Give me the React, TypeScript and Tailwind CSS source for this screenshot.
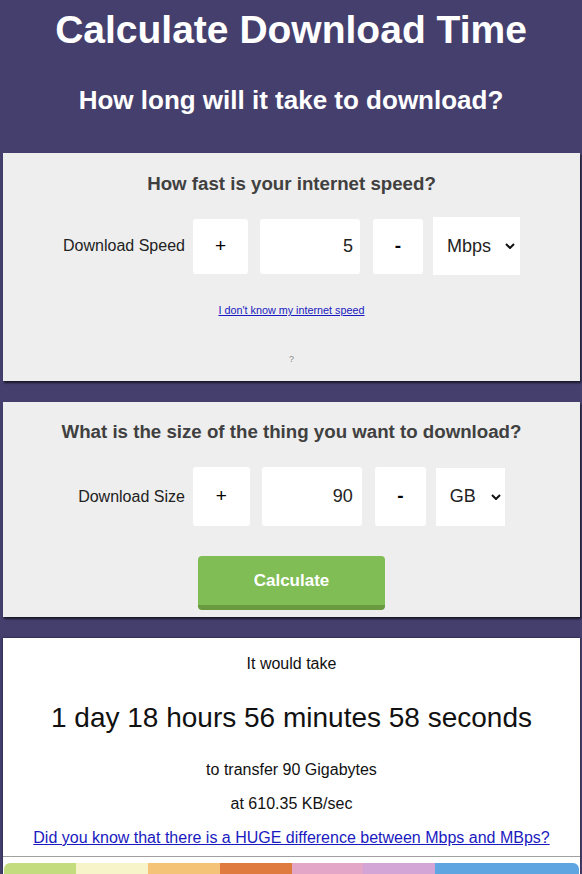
import { useState } from "react";

const strip = [
  "bg-[#c3dc7e]",
  "bg-[#f6f4c8]",
  "bg-[#f4c378]",
  "bg-[#e07b40]",
  "bg-[#e3a6c6]",
  "bg-[#d3a5d7]",
  "bg-[#5fa5e2]",
  "bg-[#5fa5e2]",
];

type RowProps = {
  label: string;
  value: string;
  unit: string;
  units: string[];
  onChange: (v: string) => void;
  onUnit: (v: string) => void;
  plusCls: string;
  inputCls: string;
  minusCls: string;
  selectCls: string;
};

function Chevron() {
  return (
    <svg width="10" height="6" viewBox="0 0 10 6" className="shrink-0">
      <path d="M1 1l4 4 4-4" fill="none" stroke="#111" strokeWidth="2" />
    </svg>
  );
}

function InputRow(p: RowProps) {
  const step = (d: number) => {
    const n = Number(p.value) || 0;
    p.onChange(String(Math.max(0, n + d)));
  };
  return (
    <div className="flex items-center justify-center text-[#222]">
      <span className="text-[16px]">{p.label}</span>
      <button
        onClick={() => step(1)}
        className={`ml-[8px] flex items-center justify-center rounded-[3px] bg-white text-[19px] text-black ${p.plusCls}`}
      >
        +
      </button>
      <input
        value={p.value}
        onChange={(e) => p.onChange(e.target.value)}
        className={`ml-[12px] w-[100px] rounded-[3px] bg-white pr-[7px] text-right text-[18px] outline-none ${p.inputCls}`}
      />
      <button
        onClick={() => step(-1)}
        className={`ml-[13px] flex items-center justify-center rounded-[3px] bg-white text-[19px] font-bold text-black ${p.minusCls}`}
      >
        -
      </button>
      <div className={`ml-[10px] flex items-center bg-white pl-[14px] ${p.selectCls}`}>
        <select
          value={p.unit}
          onChange={(e) => p.onUnit(e.target.value)}
          className="flex-1 appearance-none bg-transparent text-[18px] outline-none"
        >
          {p.units.map((u) => (
            <option key={u}>{u}</option>
          ))}
        </select>
        <Chevron />
      </div>
    </div>
  );
}

export default function App() {
  const [speed, setSpeed] = useState("5");
  const [speedUnit, setSpeedUnit] = useState("Mbps");
  const [size, setSize] = useState("90");
  const [sizeUnit, setSizeUnit] = useState("GB");

  return (
    <div className="h-[874px] overflow-hidden bg-[#453f6e] font-[family-name:Liberation_Sans,Arial,sans-serif]">
      <h1 className="pt-[7px] text-center text-[39px] font-bold leading-[46px] text-white">
        Calculate Download Time
      </h1>
      <h2 className="mt-[32px] text-center text-[26px] font-bold leading-[30px] text-white">
        How long will it take to download?
      </h2>

      <section className="ml-[3px] mr-[2px] mt-[38px] h-[228px] bg-[#eeeeee] pt-[20px] shadow-[1px_2px_2px_rgba(0,0,0,0.65)]">
        <h3 className="text-center text-[18.7px] font-bold leading-[22px] text-[#404040]">
          How fast is your internet speed?
        </h3>
        <div className="mt-[22px] h-[58px]">
          <InputRow
            label="Download Speed"
            value={speed}
            unit={speedUnit}
            units={["Kbps", "Mbps", "Gbps"]}
            onChange={setSpeed}
            onUnit={setSpeedUnit}
            plusCls="h-[55px] w-[55px]"
            inputCls="h-[55px]"
            minusCls="h-[55px] w-[50px]"
            selectCls="h-[58px] w-[87px] pr-[5px]"
          />
        </div>
        <p className="mt-[29px] text-center text-[10.8px] leading-[13px]">
          <a href="#" className="text-[#1a1ac0] underline">
            I don't know my internet speed
          </a>
        </p>
        <p className="mt-[37px] text-center text-[9px] leading-[11px] text-[#888]">?</p>
      </section>

      <section className="ml-[3px] mr-[2px] mt-[21px] h-[215px] bg-[#eeeeee] pt-[19px] shadow-[1px_2px_2px_rgba(0,0,0,0.65)]">
        <h3 className="text-center text-[18.7px] font-bold leading-[22px] text-[#404040]">
          What is the size of the thing you want to download?
        </h3>
        <div className="mt-[24px] h-[60px]">
          <InputRow
            label="Download Size"
            value={size}
            unit={sizeUnit}
            units={["KB", "MB", "GB", "TB"]}
            onChange={setSize}
            onUnit={setSizeUnit}
            plusCls="h-[59px] w-[57px]"
            inputCls="h-[59px] pr-[9px]"
            minusCls="h-[59px] w-[51px]"
            selectCls="h-[58px] w-[69px] pr-[4px]"
          />
        </div>
        <div className="mt-[29px] flex justify-center">
          <button className="h-[54px] w-[187px] rounded-[4px] border-b-[5px] border-[#6a9a40] bg-[#80bd55] text-[17px] font-bold text-white">
            Calculate
          </button>
        </div>
      </section>

      <section className="ml-[3px] mr-[2px] mt-[21px] bg-white pt-[16px] text-center text-[#111] shadow-[0_0_2px_rgba(0,0,0,0.6)]">
        <p className="text-[16px] leading-[20px]">It would take</p>
        <p className="mt-[28px] text-[28px] leading-[32px]">
          1 day 18 hours 56 minutes 58 seconds
        </p>
        <p className="mt-[26px] text-[16px] leading-[20px]">to transfer 90 Gigabytes</p>
        <p className="mt-[14px] text-[16px] leading-[20px]">at 610.35 KB/sec</p>
        <p className="mt-[14px] text-[16px] leading-[20px]">
          <a href="#" className="text-[#1a1ac0] underline">
            Did you know that there is a HUGE difference between Mbps and MBps?
          </a>
        </p>
        <div className="mt-[8px] h-px bg-[#a0a0a0]" />
        <div className="mx-px mt-[6px] flex h-[20px] overflow-hidden rounded-t-[6px]">
          {strip.map((c, i) => (
            <div key={i} className={`flex-1 ${c}`} />
          ))}
        </div>
      </section>
    </div>
  );
}
